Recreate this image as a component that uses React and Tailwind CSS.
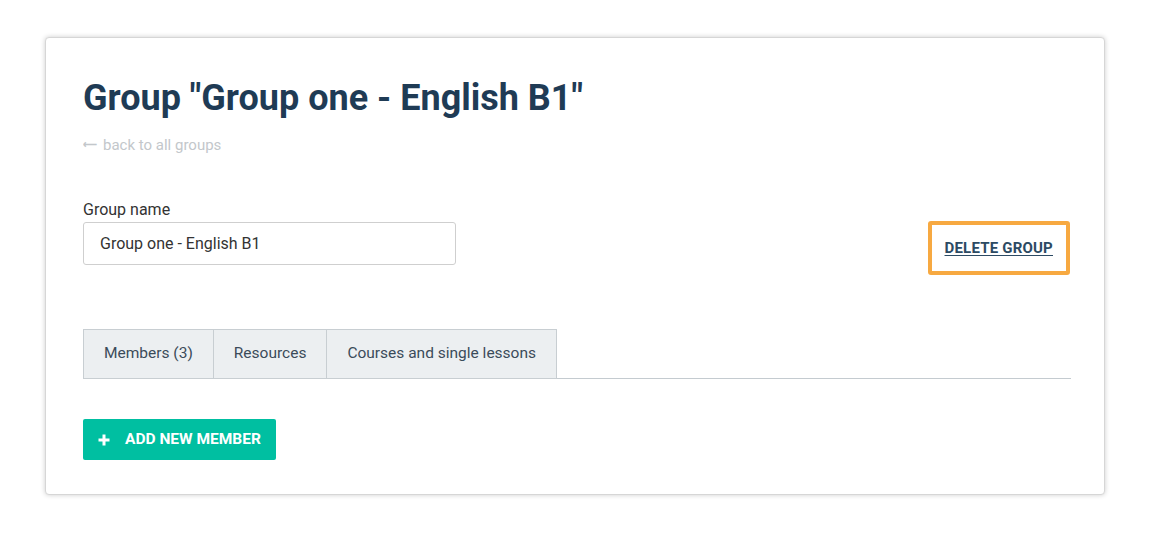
import React from 'react';

const tabs = ['Members (3)', 'Resources', 'Courses and single lessons'];

export default function App() {
  return (
    <div className="min-h-[538px] bg-white pt-[37px] pl-[45px] pr-[48px]" style={{ fontFamily: 'Roboto, "Liberation Sans", sans-serif' }}>
      <div className="rounded-[4px] border border-[#d6d6d6] bg-white shadow-[0_0_5px_rgba(0,0,0,0.2)] pl-[37px] pr-[33px] pt-[38px] pb-[34px]">
        <h1 className="text-[36px] leading-[44px] font-bold text-[#1f3b55]">Group "Group one - English B1"</h1>
        <a className="mt-[16px] flex items-center gap-[4px] text-[15px] leading-[18px] text-[#c3c7cb]">
          <span className="text-[13px] font-bold scale-x-75 -ml-[2px] -mr-[1px]">⟵</span>
          <span>back to all groups</span>
        </a>

        <div className="mt-[46px] flex items-start justify-between">
          <div>
            <label className="block text-[16px] leading-[20px] text-[#333]">Group name</label>
            <div className="mt-[2px] w-[373px] h-[43px] rounded-[3px] border border-[#cfcfcf] pl-[16px] flex items-center text-[16px] text-[#333]">
              Group one - English B1
            </div>
          </div>
          <div className="mt-[21px] mr-[1px] rounded-[3px] border-[4px] border-[#f7a941] px-[13px] h-[54px] flex items-center">
            <a className="text-[15px] font-bold uppercase underline underline-offset-2 tracking-[0.2px] text-[#2c4a63]">Delete group</a>
          </div>
        </div>

        <div className="mt-[54px] flex border-b border-[#c4cbd0]">
          {tabs.map((t) => (
            <div key={t} className="h-[50px] -mb-px border border-[#c8ced2] -ml-px first:ml-0 bg-[#eceff1] px-[20px] flex items-center text-[15.5px] text-[#3b4b5a]">
              {t}
            </div>
          ))}
        </div>

        <button className="mt-[40px] h-[41px] w-[193px] bg-[#00bfa1] rounded-[2px] flex items-center pl-[15px] gap-[15px] text-white text-[15.5px] font-bold uppercase">
          <svg width="12" height="12" viewBox="0 0 12 12"><path d="M6 0.5v11M0.5 6h11" stroke="white" strokeWidth="3" /></svg>
          Add new member
        </button>
      </div>
    </div>
  );
}
